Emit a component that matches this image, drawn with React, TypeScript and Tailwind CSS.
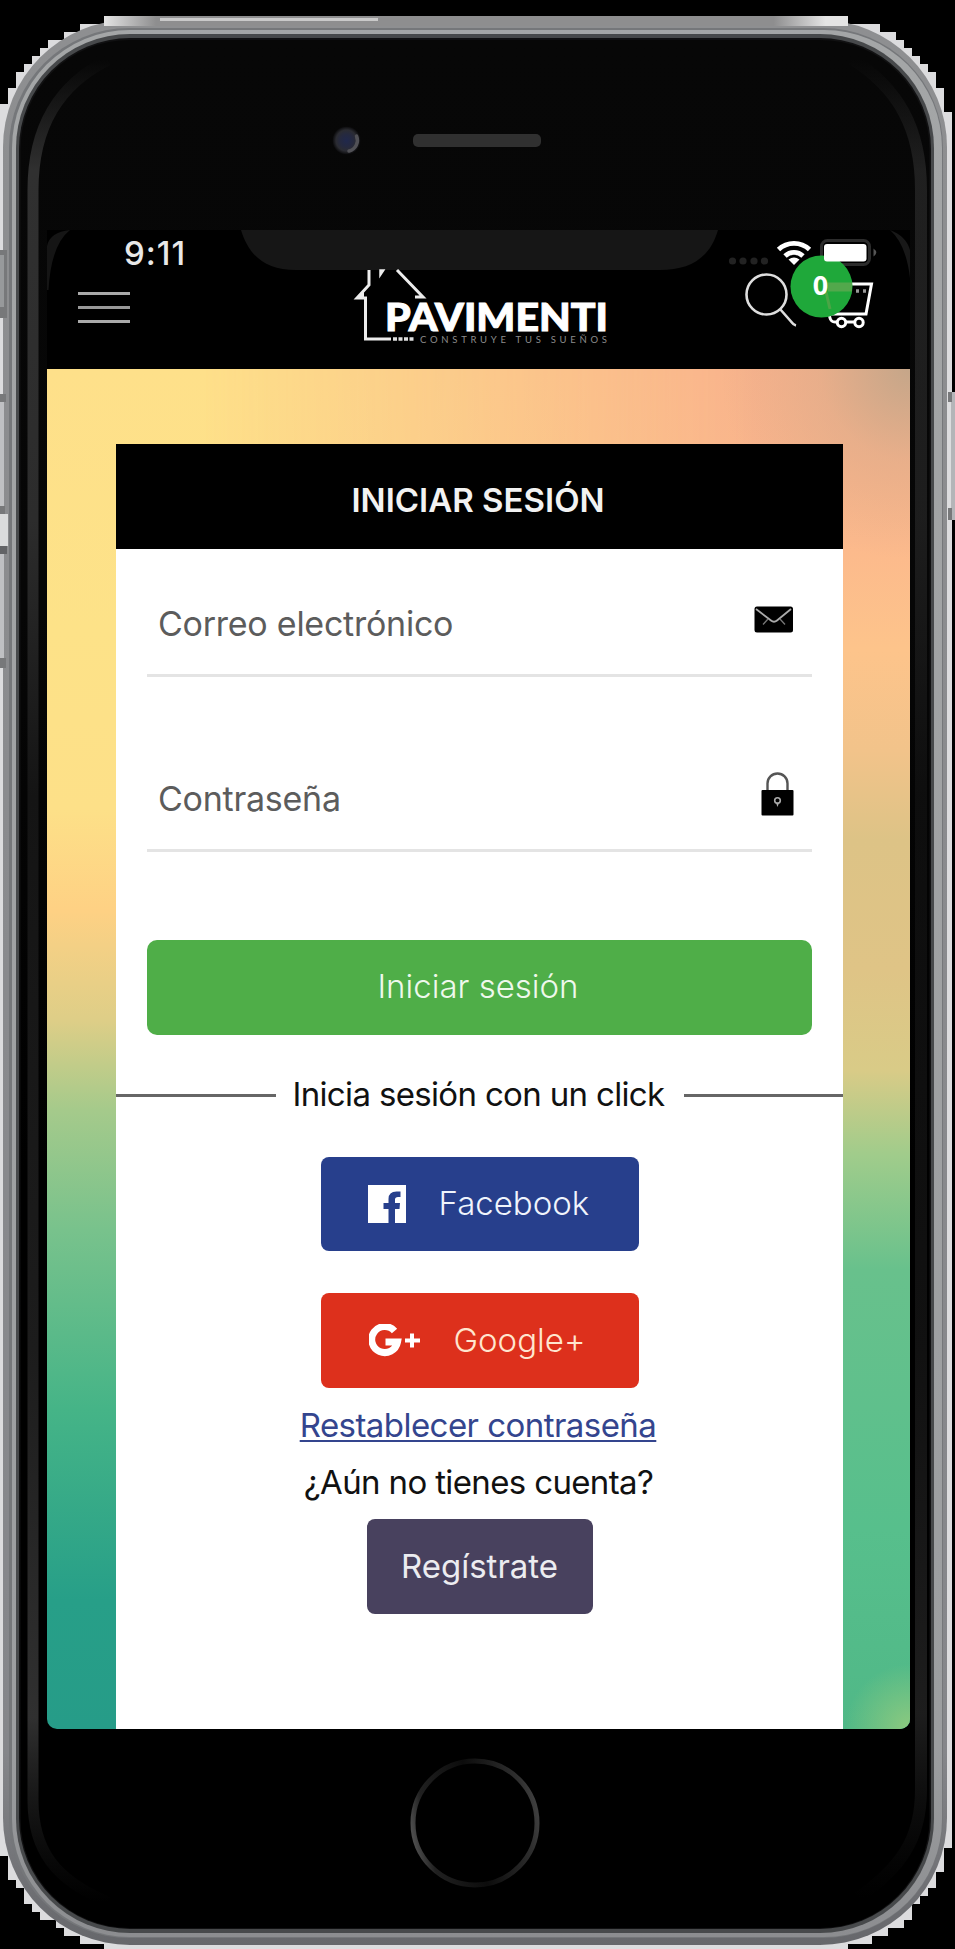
import React from "react";

const outline =
  "M0 104H8V88H16V72H24V64H32V56H40V48H48V40H64V32H80V24H104V16H848V24H880V32H896V40H904V48H912V56H920V64H928V72H936V88H944V112H952V1848H944V1872H936V1888H928V1896H920V1904H912V1920H904V1928H888V1936H872V1944H848V1949H104V1944H80V1936H64V1928H56V1920H40V1912H32V1904H24V1888H16V1880H8V1856H0Z";

function PhoneFrame() {
  return (
    <svg className="absolute inset-0" width="955" height="1949" viewBox="0 0 955 1949" fill="none">
      <defs>
        <linearGradient id="topShine" x1="0" x2="1" y1="0" y2="0">
          <stop offset="0" stopColor="#e4e4e4" />
          <stop offset="0.07" stopColor="#8e8e8f" />
          <stop offset="0.9" stopColor="#8e8e8f" />
          <stop offset="0.97" stopColor="#e4e4e4" />
        </linearGradient>
        <linearGradient id="rim" x1="0" x2="0" y1="0" y2="1">
          <stop offset="0" stopColor="#8e8f91" />
          <stop offset="0.9" stopColor="#85868a" />
          <stop offset="1" stopColor="#66676b" />
        </linearGradient>
        <linearGradient id="band" x1="0" x2="0" y1="0" y2="1">
          <stop offset="0" stopColor="#a4a6a7" />
          <stop offset="0.9" stopColor="#9c9ea0" />
          <stop offset="1" stopColor="#8c8d90" />
        </linearGradient>
        <linearGradient id="glare" x1="0" x2="0" y1="0" y2="1">
          <stop offset="0" stopColor="#2e2e2e" stopOpacity="0" />
          <stop offset="0.06" stopColor="#303030" />
          <stop offset="0.25" stopColor="#2c2c2c" />
          <stop offset="0.4" stopColor="#141414" />
          <stop offset="0.7" stopColor="#1c1c1c" />
          <stop offset="0.9" stopColor="#303030" />
          <stop offset="1" stopColor="#202020" stopOpacity="0" />
        </linearGradient>
        <linearGradient id="face" x1="0" x2="0" y1="0" y2="1">
          <stop offset="0" stopColor="#070707" />
          <stop offset="0.3" stopColor="#060606" />
          <stop offset="0.6" stopColor="#000" />
        </linearGradient>
        <linearGradient id="ring" x1="0" x2="1" y1="0.6" y2="0.4">
          <stop offset="0" stopColor="#4c4c4c" />
          <stop offset="0.12" stopColor="#202020" />
          <stop offset="0.5" stopColor="#0c0c0c" />
          <stop offset="0.9" stopColor="#2e2e2e" />
          <stop offset="1" stopColor="#3e3e3e" />
        </linearGradient>
        <radialGradient id="lens">
          <stop offset="0" stopColor="#20284c" />
          <stop offset="0.45" stopColor="#25293f" />
          <stop offset="0.75" stopColor="#2b2c32" />
          <stop offset="1" stopColor="#0a0a0b" />
        </radialGradient>
      </defs>
      <path d={outline} fill="#dcdcde" shapeRendering="crispEdges" />
      <rect x="3" y="20" width="944" height="1925" rx="127" fill="url(#rim)" />
      <rect x="104" y="16" width="744" height="10" fill="url(#topShine)" />
      <path d="M160 19.500H378" stroke="#c9c9c9" strokeWidth="3" />
      <rect x="9" y="28" width="934" height="1910" rx="120" fill="#75777a" />
      <rect x="12" y="30" width="930" height="1907" rx="118" fill="url(#band)" />
      <rect x="16" y="34" width="918" height="1899" rx="114" fill="#47494b" />
      <rect x="19" y="38" width="912" height="1891" rx="111" fill="#111112" />
      <rect x="20.500" y="40" width="909" height="1888" rx="109" fill="url(#face)" />
      <path d="M108 60C60 84 33 125 33 190V1800C33 1850 55 1880 108 1902" stroke="url(#glare)" strokeWidth="11" />
      <path d="M852 59C898 88 921 128 921 190V1790C921 1840 900 1868 858 1898" stroke="url(#glare)" strokeOpacity="0.6" strokeWidth="12" />
      <rect x="0" y="250" width="7" height="68" fill="#77787a" />
      <rect x="0" y="255" width="4" height="52" fill="#97999b" />
      <rect x="0" y="394" width="6" height="8" fill="#77787a" />
      <rect x="0" y="402" width="4" height="104" fill="#bfc0c3" />
      <rect x="0" y="506" width="5" height="8" fill="#77787a" />
      <rect x="0" y="514" width="8" height="32" fill="#dadbdc" />
      <rect x="0" y="546" width="7" height="8" fill="#626366" />
      <rect x="0" y="554" width="4" height="104" fill="#bfc0c3" />
      <rect x="0" y="658" width="6" height="10" fill="#77787a" />
      <rect x="951" y="392" width="4" height="128" fill="#b4b5b8" />
      <rect x="948" y="392" width="4" height="10" fill="#77787a" />
      <rect x="948" y="508" width="4" height="12" fill="#77787a" />
      <circle cx="346.500" cy="140.500" r="14" fill="url(#lens)" />
      <path d="M356.500 136A11 11 0 0 1 349 151" stroke="#515156" strokeWidth="3.500" strokeLinecap="round" />
      <rect x="413" y="134" width="128" height="13" rx="5" fill="#303030" />
      <circle cx="475" cy="1823" r="62" stroke="url(#ring)" strokeWidth="5" />
    </svg>
  );
}

function StatusIcons() {
  return (
    <svg className="absolute left-[681px] top-0" width="170" height="110" viewBox="728 230 170 110" fill="none">
      <g fill="#222">
        <circle cx="732.500" cy="261" r="3.600" />
        <circle cx="743" cy="261" r="3.600" />
        <circle cx="754" cy="261" r="3.600" />
        <circle cx="764.500" cy="261" r="3.600" />
      </g>
      <g stroke="#fff" strokeWidth="4.800">
        <path d="M778.500 249.500A22.500 22.500 0 0 1 809.500 249.500" />
        <path d="M785 256A13 13 0 0 1 803 256" />
      </g>
      <path d="M788.500 259.500Q794 255.500 799.500 259.500L794 265Z" fill="#fff" />
      <rect x="821.500" y="240.500" width="48" height="24" rx="6" stroke="#2c2c2c" strokeWidth="3" />
      <path d="M873.500 248.500Q879 252.500 873.500 256.500Z" fill="#555" />
      <g stroke="#dedede" strokeWidth="2.600">
        <circle cx="766.500" cy="294.500" r="20" />
        <path d="M780 309L791 321.500Q793.500 325 796 325.500" />
      </g>
      <g stroke="#fff" strokeWidth="3">
        <path d="M826 284H871.500L866 314H831" />
        <path d="M822 287L830 318Q831 322 835 322H858" />
        <circle cx="841.500" cy="322.500" r="4.200" fill="#000" />
        <circle cx="859" cy="322.500" r="4.200" fill="#000" />
      </g>
      <path d="M856 291H870" stroke="#999" strokeWidth="3.500" strokeDasharray="3 4" />
      <circle cx="821.500" cy="286.500" r="31" fill="#1fa83a" />
      <path d="M828 287H852" stroke="#52a84c" strokeWidth="9" />
      <path d="M826 292L830 309" stroke="#4ba546" strokeWidth="3" />
      <rect x="824" y="244" width="42.500" height="17.500" rx="3" fill="#fff" />
      <text x="820.500" y="295" textAnchor="middle" fontFamily="Open Sans, sans-serif" fontWeight="700" fontSize="27" fill="#fff">0</text>
    </svg>
  );
}

function Logo() {
  return (
    <svg className="absolute left-[305px] top-[38px]" width="260" height="80" viewBox="352 268 260 80" fill="none">
      <path d="M369 270V285L357 298H365.500V339H391" stroke="#ececec" strokeWidth="3" />
      <path d="M357 298L364 291V299Z" fill="#ececec" />
      <path d="M380 276V270H384Z" stroke="#ececec" strokeWidth="1.500" fill="#ececec" />
      <path d="M397 270L423 297H415" stroke="#ececec" strokeWidth="3" />
      <path d="M393 339H415" stroke="#e0e0e0" strokeWidth="3.500" strokeDasharray="4 1.500" />
      <text x="385" y="331" textLength="223" lengthAdjust="spacingAndGlyphs" fontFamily="Lato, sans-serif" fontWeight="900" fontSize="38" fill="#fff" stroke="#fff" strokeWidth="1">PAVIMENTI</text>
      <text x="420" y="343" textLength="187" fontFamily="Lato, sans-serif" fontSize="9.500" fill="#8c8c8c">CONSTRUYE TUS SUEÑOS</text>
    </svg>
  );
}

function AppHeader() {
  return (
    <header className="relative h-[139px] bg-black">
      <svg className="absolute left-0 top-0" width="863" height="60" viewBox="47 230 863 60">
        <path d="M47 290V246Q50 232 70 230Q51 245 48.500 290Z" fill="#151515" />
        <path d="M890 230Q906 236 910 250V278Q906 244 890 230Z" fill="#181818" />
        <path d="M241 230H718C710 258 690 270 660 270H296C265 270 249 256 241 230Z" fill="#161616" />
      </svg>
      <span className="absolute left-[77px] top-[2px] text-[33px] leading-[42px] font-medium tracking-[1px] text-[#e8e8e8]">9:11</span>
      <div className="absolute left-[31px] top-[62px] flex w-[52px] flex-col gap-[11px]">
        <i className="h-[3px] bg-[#aaa]" />
        <i className="h-[3px] bg-[#999]" />
        <i className="h-[3px] bg-[#aaa]" />
      </div>
      <Logo />
      <StatusIcons />
    </header>
  );
}

function EmailIcon() {
  return (
    <svg width="40" height="27" viewBox="0 0 40 27" fill="none">
      <rect x="0.500" y="0.500" width="38.500" height="26" rx="2.500" fill="#000" />
      <path d="M2 3L17 14.500Q20 17 23 14.500L37 3" stroke="#aaa" strokeWidth="1.800" />
      <path d="M14 13L9 18.500M26 13L31 18.500" stroke="#777" strokeWidth="1.300" />
    </svg>
  );
}

function LockIcon() {
  return (
    <svg width="33" height="44" viewBox="0 0 33 44" fill="none">
      <path d="M6.500 19V11.500A10 10 0 0 1 26.500 11.500V19" stroke="#555" strokeWidth="2.400" />
      <rect x="0.500" y="18" width="32" height="25.500" rx="1" fill="#000" />
      <circle cx="16.500" cy="28.500" r="2.800" stroke="#aaa" strokeWidth="1.600" />
      <path d="M14.800 30.500H18.200L16.500 35Z" fill="#aaa" />
    </svg>
  );
}

export default function App() {
  return (
    <main className="relative h-[1949px] w-[955px] overflow-hidden bg-black font-[Inter,sans-serif]">
      <PhoneFrame />
      <div className="relative ml-[47px] pt-[230px]">
        <section className="relative flex h-[1499px] w-[863px] flex-col overflow-hidden rounded-b-[10px] bg-[linear-gradient(to_bottom,#fee08a_139px,#fde288_400px,#fde088_580px,#fed184_680px,#dece87_790px,#a5ca8b_880px,#78c28c_1000px,#45b487_1180px,#279f88_1370px,#269c88_1499px)]">
          <div className="absolute inset-0 bg-[linear-gradient(to_bottom,#f9b28c_139px,#fab58b_250px,#fcb98c_310px,#fdc48b_420px,#f2c38a_520px,#ddc386_610px,#dfc486_740px,#d9cb87_840px,#a0cc8b_925px,#68c18c_1040px,#57bf8c_1300px,#50b887_1499px)] [mask-image:linear-gradient(to_right,transparent_18%,black_82%)]" />
          <div className="absolute inset-0 bg-[radial-gradient(circle_at_863px_139px,#c5a689_0px,#d9aa8988_90px,transparent_190px),radial-gradient(circle_at_863px_1499px,#8dca7f_0px,transparent_65px)]" />
          <AppHeader />
          <div className="relative mt-[75px] ml-[69px] flex w-[727px] flex-1 flex-col bg-white">
            <h1 className="flex h-[105px] shrink-0 items-center justify-center bg-black pt-[9px] pr-[3px] text-[33px] font-semibold text-[#f2f2f2]">INICIAR SESIÓN</h1>
            <form className="flex flex-col px-[31px]">
              <label className="flex h-[128px] items-start justify-between border-b-[3px] border-[#e4e4e4] pr-[18px] pl-[11px]">
                <span className="mt-[53px] text-[34px] leading-[44px] tracking-[-0.25px] text-[#5c5c5c]">Correo electrónico</span>
                <span className="mt-[57px]"><EmailIcon /></span>
              </label>
              <label className="flex h-[175px] items-start justify-between border-b-[3px] border-[#e4e4e4] pr-[18px] pl-[11px]">
                <span className="mt-[100px] text-[34px] leading-[44px] tracking-[-0.25px] text-[#5c5c5c]">Contraseña</span>
                <span className="mt-[95px]"><LockIcon /></span>
              </label>
              <button type="button" className="mt-[88px] h-[95px] rounded-[10px] bg-[#4fae48] pr-[3px] pb-[2px] text-[33px] font-light text-[#eef8ec]">Iniciar sesión</button>
            </form>
            <div className="mt-[38px] flex h-[44px] items-center">
              <i className="h-[3px] flex-1 bg-[#666]" />
              <span className="w-[408px] pr-[2px] text-center text-[33px] tracking-[-0.66px] text-[#111]">Inicia sesión con un click</span>
              <i className="h-[3px] flex-1 bg-[#666]" />
            </div>
            <div className="mt-[40px] flex flex-col items-center">
              <button type="button" className="flex h-[94px] w-[318px] items-center rounded-[8px] bg-[#273f8c] pl-[47px]">
                <svg width="38" height="38" viewBox="0 0 38 38">
                  <path d="M0 0H38V38H27V24H31.500L32 18H27V14.500Q27 12 30 12H32.500V6.500H28.500Q20.500 6.500 20.500 14V18H15.500V24H20.500V38H0Z" fill="#fff" />
                </svg>
                <span className="ml-[33px] text-[33px] font-light text-[#f0f4fc]">Facebook</span>
              </button>
              <button type="button" className="mt-[42px] flex h-[95px] w-[318px] items-center rounded-[8px] bg-[#dd301c] pl-[48px]">
                <svg width="52" height="34" viewBox="0 0 52 34" fill="none">
                  <path d="M25.500 7A13 13 0 1 0 28.500 18H16.500" stroke="#fff" strokeWidth="7" />
                  <path d="M43 9.500V23.500M36 16.500H51" stroke="#fff" strokeWidth="4" />
                </svg>
                <span className="ml-[33px] text-[33px] font-light text-[#ffe6cf]">Google+</span>
              </button>
              <a className="mt-[15px] mr-[3px] text-[33px] leading-[44px] tracking-[-0.55px] text-[#34458e] underline decoration-[2px] underline-offset-[3px]">Restablecer contraseña</a>
              <p className="mt-[13px] mr-[2px] text-[33px] leading-[44px] tracking-[-0.64px] text-[#111]">¿Aún no tienes cuenta?</p>
              <button type="button" className="mt-[15px] h-[95px] w-[226px] rounded-[8px] bg-[#48415e] text-[33px] font-normal text-[#ececf0]">Regístrate</button>
            </div>
          </div>
        </section>
      </div>
    </main>
  );
}
